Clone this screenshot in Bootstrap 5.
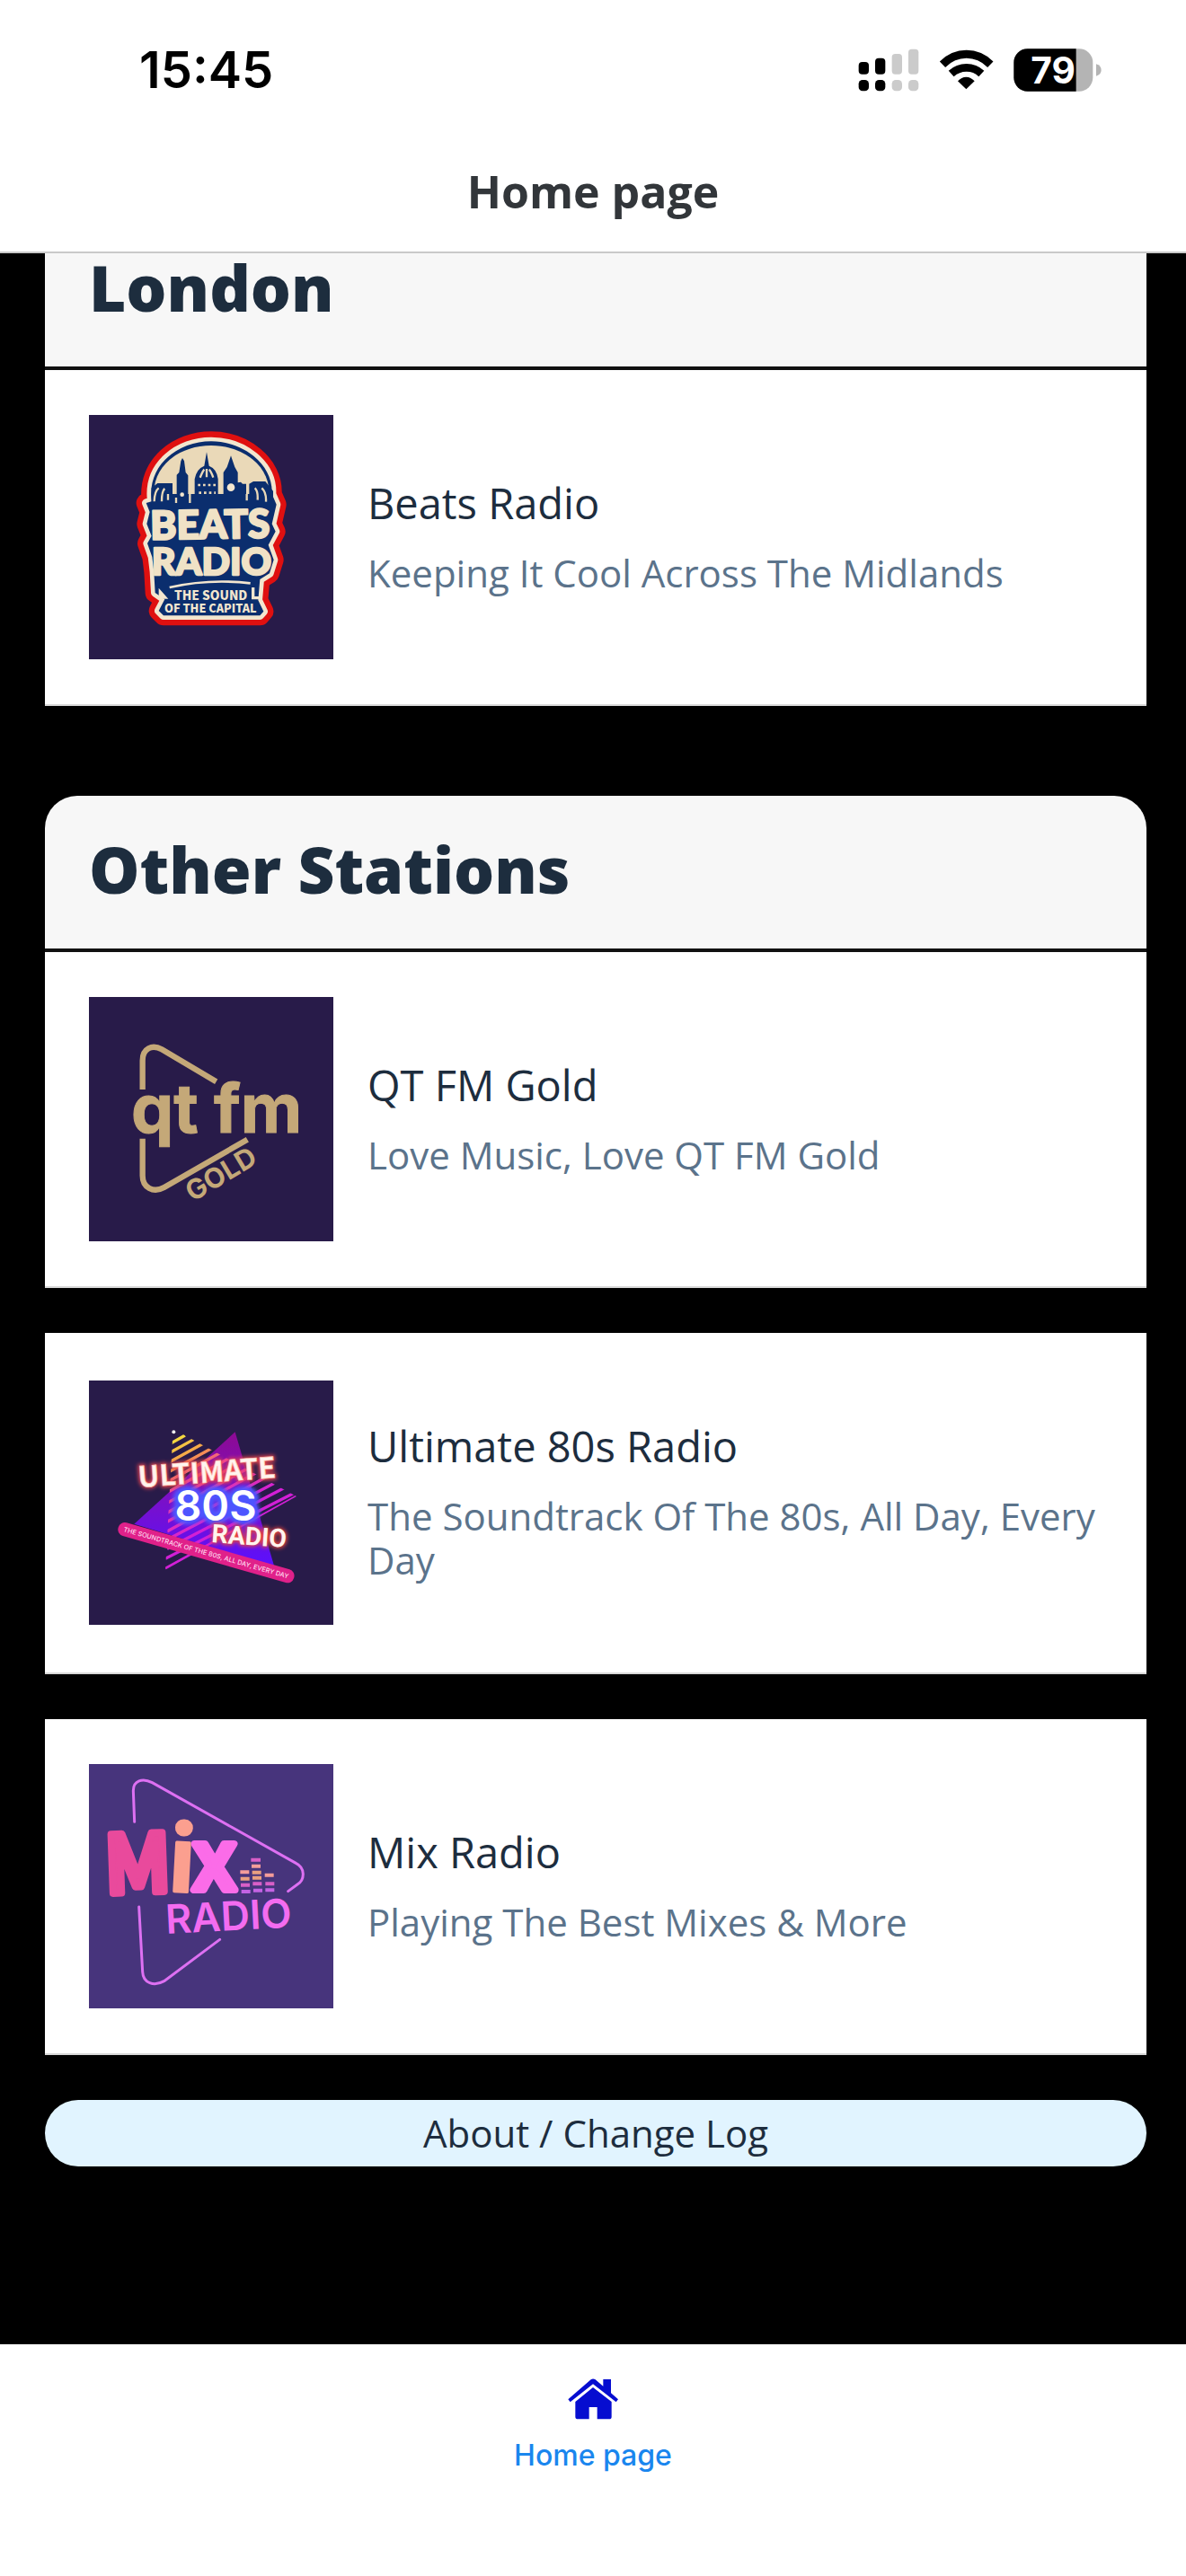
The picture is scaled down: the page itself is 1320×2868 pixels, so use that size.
<!DOCTYPE html>
<html lang="en">
<head>
<meta charset="utf-8">
<meta name="viewport" content="width=device-width, initial-scale=1">
<title>Home page</title>
<link href="https://cdn.jsdelivr.net/npm/bootstrap@5.3.0/dist/css/bootstrap.min.css" rel="stylesheet">
<style>
  :root { --ink: #1d2d3e; --ink-soft: #5b738b; --gutter: 50px; }
  body { font-family: "Open Sans", "Noto Sans", sans-serif; color: var(--ink); background: #000; }
  svg { display: block; flex: none; }

  .status-strip { height: 138px; padding: 18px 94px 0 155px; font-family: Inter, "Liberation Sans", sans-serif; }
  .clock { font-size: 56px; line-height: 60px; font-weight: 600; color: #000; }
  .status-icons { gap: 22px; }
  .title-bar { height: 144px; padding-top: 8px; border-bottom: 2px solid #c9c9c9; }
  .title-bar h1 { font-size: 50px; line-height: 60px; font-weight: 700; color: #32363a; }

  .feed { padding: 0 44px 196px 50px; }
  .station-group { margin-bottom: 100px; }
  .station-group:last-of-type { margin-bottom: var(--gutter); }
  .group-head { padding: 44px 49px 50px; background: #f7f7f7; border-bottom: 4px solid #111; border-radius: 36px 36px 0 0; }
  .group-head.under-bar { padding-top: 0; border-radius: 0; }
  .group-head h2 { font-size: 71px; line-height: 76px; font-weight: 800; }
  .station-list { gap: var(--gutter); }
  .station { gap: 38px; padding: 50px 49px; color: var(--ink); border-bottom: 2px solid #d9d9d9; }
  .station-art { width: 272px; height: 272px; }
  .station-text { padding: 47px 0 51px; }
  .station-name { font-size: 47px; line-height: 58px; margin-bottom: 24px; }
  .station-tag { font-size: 42px; line-height: 49px; color: var(--ink-soft); }
  .about-btn { padding: 12px 24px; font-size: 42px; line-height: 50px; color: var(--ink); background: #e1f4ff; border: 0; border-radius: 37px; }

  .tab-bar { height: 258px; padding-top: 38px; }
  .tab-link { gap: 20px; font-family: Inter, "Liberation Sans", sans-serif; font-size: 32px; line-height: 40px; font-weight: 500; color: #1a86ee; }
</style>
</head>
<body class="d-flex flex-column min-vh-100">

<header class="bg-white">
  <div class="status-strip d-flex align-items-center justify-content-between">
    <time class="clock">15:45</time>
    <div class="status-icons d-flex align-items-center">
      <svg width="68" height="48" viewBox="44 43 204 144" aria-label="Signal">
        <g fill="#000"><rect x="46" y="88" width="34" height="41" rx="12"/><rect x="101" y="75" width="34" height="54" rx="12"/><rect x="46" y="148" width="34" height="37" rx="13"/><rect x="101" y="148" width="34" height="37" rx="13"/></g>
        <g fill="#cbcbcb"><rect x="157" y="61" width="34" height="68" rx="11"/><rect x="212" y="45" width="34" height="84" rx="11"/><rect x="157" y="148" width="34" height="37" rx="13"/><rect x="212" y="148" width="34" height="37" rx="13"/></g>
      </svg>
      <svg width="61" height="48" viewBox="315 43 183 144" aria-label="Wi-Fi">
        <g fill="none" stroke="#000"><path stroke-width="27" d="M327 96Q362 62 407 62T487 96"/><path stroke-width="26" d="M356 127Q378 107 407 107T457 127"/></g>
        <path d="M406 179L378 152Q390 138 406 138T434 152Z"/>
      </svg>
      <svg width="98" height="48" viewBox="564 43 294 144" aria-label="Battery 79 percent">
        <clipPath id="cell"><rect x="565" y="44" width="264" height="142" rx="46"/></clipPath>
        <g clip-path="url(#cell)"><path fill="#b4b4b4" d="M560 40h280v150H560z"/><path d="M560 40h213v150H560z"/></g>
        <path fill="#b4b4b4" d="M840 95Q857 100 857 115T840 135Z"/>
        <text x="696" y="160" text-anchor="middle" fill="#fff" font-family="Inter" font-weight="700" font-size="122">79</text>
      </svg>
    </div>
  </div>
  <div class="title-bar d-flex align-items-center justify-content-center">
    <h1 class="m-0">Home page</h1>
  </div>
</header>

<main class="feed flex-grow-1">
  <section class="station-group">
    <div class="group-head under-bar"><h2 class="m-0">London</h2></div>
    <div class="station-list d-flex flex-column">
      <a href="#" class="station bg-white d-flex align-items-center text-decoration-none">
        <svg class="station-art" viewBox="29 36 816 816" aria-label="Beats Radio logo">
          <path fill="#281b49" d="M29 36h816v816H29z"/>
          <g fill="#0b2e6e" stroke-linejoin="round">
            <path stroke="#df1010" stroke-width="66" d="M238 325C222 200 330 124 437 124S645 200 640 300L655 335L640 400L652 425L628 470L646 520L632 565L600 585L594 655L612 692L600 706H278L262 690L282 652L250 630L246 560L240 510L224 465L238 440L222 400L232 360L220 330Z"/>
            <path stroke="#f3e6cf" stroke-width="28" d="M238 325C222 200 330 124 437 124S645 200 640 300L655 335L640 400L652 425L628 470L646 520L632 565L600 585L594 655L612 692L600 706H278L262 690L282 652L250 630L246 560L240 510L224 465L238 440L222 400L232 360L220 330Z"/>
          </g>
          <path fill="#0b2e6e" d="M238 325C222 200 330 124 437 124S645 200 640 300L655 335L640 400L652 425L628 470L646 520L632 565L600 585L594 655L612 692L600 706H278L262 690L282 652L250 630L246 560L240 510L224 465L238 440L222 400L232 360L220 330Z"/>
          <path fill="#ead9b8" d="M246 300C244 204 332 138 437 138S634 205 630 300Z"/>
          <path fill="#0b2e6e" d="M238 345V280L258 264H308V300H322V236L330 228 336 190 341 180 347 190 352 228 360 238V300H382V250Q388 216 414 206L422 160 430 206Q456 216 460 250V300H478V228L490 210 503 172 516 210 526 228V262L536 260 542 266H554V300H564V266L578 258H618L644 290V345Z"/>
          <path stroke="#ead9b8" fill="none" stroke-width="7" d="M247 325Q248 290 262 280M272 325Q272 290 282 282M293 300V320M320 312V330M366 300V330M583 280Q594 290 592 320M606 280Q622 295 620 326M556 300V322M400 245Q410 222 414 218M422 244V216M444 245Q436 222 430 218"/>
          <path stroke="#ead9b8" stroke-width="8" stroke-dasharray="8 9" d="M393 270H455M396 296H452"/>
          <circle cx="503" cy="278" r="13" fill="#f3e6cf"/><circle cx="340" cy="302" r="7" fill="#f3e6cf"/>
          <g fill="#f0e2c6" stroke="#f0e2c6" stroke-linejoin="round" font-family="Lato" font-weight="900" text-anchor="middle">
            <text x="434" y="449" font-size="132" stroke-width="7" transform="rotate(-1 434 451)">BEATS</text>
            <text x="438" y="570" font-size="124" stroke-width="7">RADIO</text>
          </g>
          <path fill="none" stroke="#f3e6cf" stroke-width="8" d="M298 612Q430 582 568 598"/>
          <path fill="#f3e6cf" d="M262 614L294 650H262ZM572 612H582V642H600V652H572Z"/>
          <g fill="#f3e6cf" font-family="Noto Sans CJK SC" font-weight="900" text-anchor="middle">
            <text x="436" y="655" font-size="41">THE SOUND</text>
            <text x="435" y="697" font-size="38">OF THE CAPITAL</text>
          </g>
        </svg>
        <div class="station-text">
          <div class="station-name">Beats Radio</div>
          <div class="station-tag">Keeping It Cool Across The Midlands</div>
        </div>
      </a>
    </div>
  </section>

  <section class="station-group">
    <div class="group-head"><h2 class="m-0">Other Stations</h2></div>
    <div class="station-list d-flex flex-column">
      <a href="#" class="station bg-white d-flex align-items-center text-decoration-none">
        <svg class="station-art" viewBox="29 28 816 816" aria-label="QT FM Gold logo">
          <path fill="#281b49" d="M29 28h816v816H29z"/>
          <g fill="none" stroke="#c4a878" stroke-width="19"><path d="M208 337V240C208 200 240 185 272 203L454 311"/><path d="M208 501V625C208 665 244 684 280 664L558 504"/></g>
          <g fill="#c4a878" stroke="#c4a878" font-family="Inter" font-weight="700">
            <text x="170" y="480" font-size="225" stroke-width="3">qt</text>
            <text x="446" y="480" font-size="225" stroke-width="3">fm</text>
            <text x="486" y="647" font-size="92" text-anchor="middle" stroke="none" transform="rotate(-31 486 647)">GOLD</text>
          </g>
        </svg>
        <div class="station-text">
          <div class="station-name">QT FM Gold</div>
          <div class="station-tag">Love Music, Love QT FM Gold</div>
        </div>
      </a>
      <a href="#" class="station bg-white d-flex align-items-center text-decoration-none">
        <svg class="station-art" viewBox="29 18 816 816" aria-label="Ultimate 80s Radio logo">
          <defs>
            <linearGradient id="neon" gradientUnits="userSpaceOnUse" x1="310" y1="190" x2="480" y2="480"><stop offset="0" stop-color="#f4f03c"/><stop offset=".3" stop-color="#f59a4a"/><stop offset=".5" stop-color="#f0459a"/><stop offset="1" stop-color="#d21fd6"/></linearGradient>
            <linearGradient id="delta" x1="0" y1="0" x2="0" y2="1"><stop offset="0" stop-color="#8d0a92"/><stop offset=".5" stop-color="#7a10c8"/><stop offset="1" stop-color="#5a10ff"/></linearGradient>
            <clipPath id="wedge"><path d="M310 180L722 405L284 650Z"/></clipPath>
            <filter id="glow" x="-20%" y="-30%" width="140%" height="160%"><feGaussianBlur stdDeviation="6"/></filter>
          </defs>
          <path fill="#281b49" d="M29 18h816v816H29z"/>
          <path fill="url(#delta)" d="M517 190L648 640L180 497Z"/>
          <g clip-path="url(#wedge)"><path stroke="url(#neon)" stroke-width="10" fill="none" d="M290 235L350 201M290 264L380 214M290 295L410 229M290 326L440 244M290 357L470 258M290 392L500 276M290 427L530 294M290 460L560 311M290 490L600 319M290 522L630 335M290 550L665 352M290 580L700 367M284 613L725 388M284 646L725 404"/></g>
          <circle cx="312" cy="190" r="6" fill="#eee"/>
          <g font-family="Noto Sans CJK SC" font-weight="700" text-anchor="middle">
            <g transform="rotate(-4 420 320)"><text x="422" y="359" font-size="96" fill="#e8454d" stroke="#e8454d" stroke-width="11" filter="url(#glow)">ULTIMATE</text><text x="422" y="359" font-size="96" fill="#fff4ee" stroke="#ffc0b0" stroke-width="2">ULTIMATE</text></g>
            <g font-family="Inter"><text x="452" y="486" font-size="140" fill="#4d55ff" stroke="#4d55ff" stroke-width="28" stroke-linejoin="round" filter="url(#glow)">80S</text><text x="452" y="486" font-size="140" fill="#fff" font-weight="600">80S</text></g>
            <g transform="rotate(4 562 540)" font-family="Roboto"><text x="564" y="567" font-size="85" fill="#e8453d" stroke="#e8453d" stroke-width="9" filter="url(#glow)">RADIO</text><text x="564" y="567" font-size="85" fill="#fff4ee">RADIO</text></g>
          </g>
          <g transform="rotate(16 420 594)"><rect x="115" y="570" width="610" height="46" rx="22" fill="#e0218a"/><text x="420" y="601" text-anchor="middle" font-family="Inter" font-size="22" font-weight="500" fill="#ffd9ee">THE SOUNDTRACK OF THE 80S, ALL DAY, EVERY DAY</text></g>
        </svg>
        <div class="station-text">
          <div class="station-name">Ultimate 80s Radio</div>
          <div class="station-tag">The Soundtrack Of The 80s, All Day, Every Day</div>
        </div>
      </a>
      <a href="#" class="station bg-white d-flex align-items-center text-decoration-none">
        <svg class="station-art" viewBox="29 41 816 816" aria-label="Mix Radio logo">
          <path fill="#47347c" d="M29 41h816v816H29z"/>
          <g fill="none" stroke="#dd70f2" stroke-width="9" stroke-linecap="round"><path d="M181 234L177 130C177 97 207 86 240 103L720 372C752 388 750 427 725 443L694 466"/><path d="M196 518L208 735C210 773 246 785 280 766L466 627"/></g>
          <g font-family="Noto Sans CJK SC" stroke-linejoin="round">
            <text x="80" y="470" font-size="268" font-weight="500" fill="#e94a9c" stroke="#e94a9c" stroke-width="24" transform="rotate(-2 190 370)">M</text>
            <text x="296" y="467" font-size="292" font-weight="700" fill="#fb9f8f" stroke="#fb9f8f" stroke-width="10" transform="rotate(3 338 370)">i</text>
            <text x="374" y="460" font-size="280" font-weight="500" fill="#fb6ce8" stroke="#fb6ce8" stroke-width="24">x</text>
          </g>
          <text x="495" y="597" font-family="Inter" font-size="134" fill="#f36cf0" text-anchor="middle" font-weight="600" transform="rotate(-3 495 550)">RADIO</text>
          <g stroke-width="12"><path stroke="#d95fc8" d="M570 361H602M536 445H566M576 441H606M618 441H648"/><path stroke="#f49c9a" d="M534 402H564M572 382H602M616 412H646"/><path stroke="#eaa080" d="M535 424H565M574 403H604M575 421H605"/><path stroke="#c463e4" d="M538 467H568M578 463H608M618 462H648"/></g>
        </svg>
        <div class="station-text">
          <div class="station-name">Mix Radio</div>
          <div class="station-tag">Playing The Best Mixes &amp; More</div>
        </div>
      </a>
    </div>
  </section>

  <button type="button" class="about-btn d-block w-100 text-center">About / Change Log</button>
</main>

<nav class="tab-bar bg-white d-flex justify-content-center">
  <a href="#" class="tab-link d-flex flex-column align-items-center text-decoration-none align-self-start" aria-current="page">
    <svg width="56" height="46" viewBox="284 144 168 138" aria-hidden="true">
      <path fill="#060dd0" d="M368 174L430 222V272Q430 280 422 280H382V240H355V280H318Q309 280 309 272V222Z"/>
      <path fill="#060dd0" d="M285 214L361 148Q368 143 376 148L402 170V147H428V193L452 214L445 223L368 163L292 223Z"/>
    </svg>
    <span>Home page</span>
  </a>
</nav>

<script src="https://cdn.jsdelivr.net/npm/bootstrap@5.3.0/dist/js/bootstrap.bundle.min.js"></script>
</body>
</html>
